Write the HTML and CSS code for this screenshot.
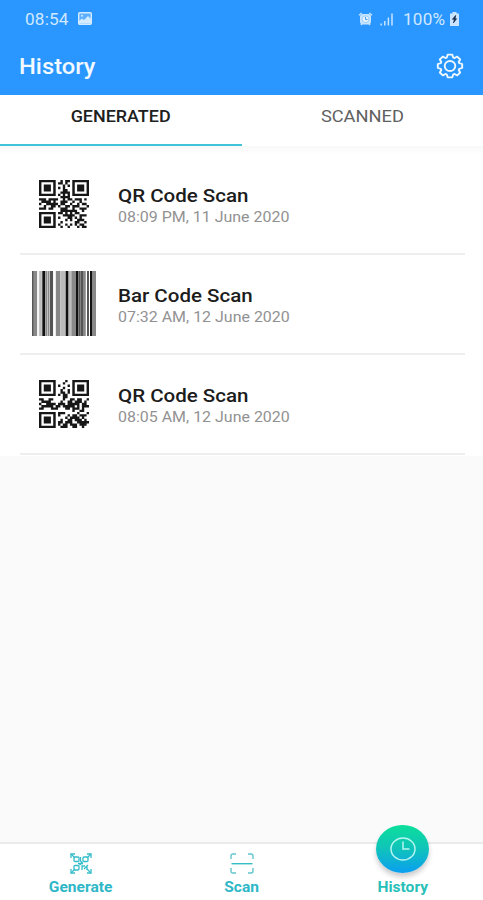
FILE: index.html
```html
<!DOCTYPE html>
<html lang="en">
<head>
<meta charset="utf-8">
<title>History</title>
<link rel="stylesheet" href="styles.css">
</head>
<body>
<div class="app">
  <header class="header">
    <div class="status">
      <span class="status-time"><span class="wide">08:54</span></span>
      <svg class="status-picture" width="14" height="13" viewBox="0 0 14 13"><rect x=".7" y=".7" width="12.6" height="11.6" rx="1" fill="#5dafff" stroke="#d5ebff" stroke-width="1.4"/><path d="M1 11.500V9l3-2.500 2 1.500 4-4 3 3v4.500z" fill="#d5ebff"/><circle cx="4" cy="3.800" r="1" fill="#d5ebff"/></svg>
      <div class="status-right">
        <svg width="15" height="14" viewBox="0 0 15 14"><path d="M1 3.3 3.7 1M14 3.3 11.3 1M3 13l1.5-2M12 13l-1.5-2" stroke="#c7e4ff" stroke-width="1.4"/><rect x="2" y="2" width="11" height="10.5" rx="3" fill="#c7e4ff"/><circle cx="7.5" cy="7.2" r="3.4" fill="#e4f3ff" stroke="#8cc6fb" stroke-width=".8"/><path d="M7.5 4.8v2.7h2" fill="none" stroke="#4b9fee"/></svg>
        <svg class="signal" width="14" height="13" viewBox="0 0 14 13" stroke="#c7e4ff" stroke-width="1.5"><path d="M1.200 12.500v-2M4.800 12.500V8M8.400 12.500V4.500M12 12.500V.5"/></svg>
        <span class="battery-text"><span class="wide">100%</span></span>
        <svg width="11" height="14" viewBox="0 0 11 14"><path d="M3.5 0h4v1.5H10V14H1V1.500h2.500z" fill="#cbe5ff"/><path d="M6.600 3.500 3.500 7.300h2L4.500 10.800l3-4H6z" fill="#152e4d" stroke="#152e4d" stroke-width=".8"/></svg>
      </div>
    </div>
    <div class="titlebar">
      <h1 class="title"><span class="wide">History</span></h1>
      <svg width="28" height="26" viewBox="-14 -13 28 26" fill="none" stroke="#eff8ff" stroke-width="1.8" stroke-linejoin="round"><g transform="scale(1.06 1)"><path d="M-2.200 -11.300H2.200L3 -8.500L4.300 -7.900L6.800 -9.400L9.600 -6.500L8.200 -4L8.700 -2.800L11.500 -2V2L8.700 2.800L8.200 4L9.600 6.500L6.800 9.400L4.300 7.900L3 8.500L2.200 11.300H-2.200L-3 8.500L-4.300 7.900L-6.800 9.400L-9.600 6.500L-8.200 4L-8.700 2.800L-11.500 2V-2L-8.700 -2.800L-8.200 -4L-9.600 -6.500L-6.800 -9.400L-4.300 -7.900L-3 -8.500Z"/><circle r="5"/></g></svg>
    </div>
  </header>
  <nav class="tabs">
    <div class="tab tab-active"><span class="wide">GENERATED</span></div>
    <div class="tab"><span class="wide">SCANNED</span></div>
  </nav>
  <main class="list">
    <article class="item">
      <div class="thumb">
        <svg width="50" height="48" viewBox="0 0 21 21" preserveAspectRatio="none" stroke="#171717" stroke-width="1.04"><g id="finders" fill="none"><path d="M.5 .5h6v6h-6zM14.500 .5h6v6h-6zM.5 14.500h6v6h-6z"/><path d="M2 3.500h3M16 3.500h3M2 17.500h3" stroke-width="3"/></g>
        <path d="M9 .5h1M11 .5h2M8 1.500h2M11 1.500h1M10 2.500h1M12 2.500h1M8 3.500h1M10 3.500h1M10 4.500h2M9 5.500h4M8 6.500h1M10 6.500h1M12 6.500h1M9 7.500h4M0 8.500h3M4 8.500h4M10 8.500h1M12 8.500h2M15 8.500h3M19 8.500h1M1 9.500h4M6 9.500h1M9 9.500h3M14 9.500h1M17 9.500h1M0 10.500h1M3 10.500h5M9 10.500h2M13 10.500h1M16 10.500h1M18 10.500h2M2 11.500h1M5 11.500h2M8 11.500h1M11 11.500h2M14 11.500h3M20 11.500h1M0 12.500h3M4 12.500h2M9 12.500h3M14 12.500h1M17 12.500h3M9 13.500h7M18 13.500h1M8 14.500h2M11 14.500h1M13 14.500h1M15 14.500h2M10 15.500h5M17 15.500h3M8 16.500h1M12 16.500h2M15 16.500h1M17 16.500h1M11 17.500h1M13 17.500h1M16 17.500h3M9 18.500h1M15 18.500h2M19 18.500h1M8 19.500h1M11 19.500h1M13 19.500h1M15 19.500h1M17 19.500h2M9 20.500h1M12 20.500h1M16 20.500h1M18 20.500h2"/></svg>
      </div>
      <div class="text"><h2 class="name"><span class="wide">QR Code Scan</span></h2><p class="date"><span class="wide">08:09 PM, 11 June 2020</span></p></div>
    </article>
    <article class="item">
      <div class="thumb">
        <svg class="barcode" width="64" height="65" viewBox="0 0 192 195" preserveAspectRatio="none"><path fill="#dedede" d="M0 0h192v195H0z"/><path fill="#888" d="M0 0h15v195H0zM40 0h6v195h-6zM48 0h4v195h-4zM72 0h12v195H72zM118 0h12v195h-12zM153 0h8v195h-8zM180 0h12v195h-12z"/><path fill="#555" d="M0 0h4v195H0zM54 0h9v195h-9zM140 0h6v195h-6zM147 0h6v195h-6z"/><path fill="#bbb" d="M22 0h7v195h-7zM85 0h14v195H85zM110 0h8v195h-8z"/><path fill="#fff" d="M16 0h4v195h-4zM64 0h6v195h-6zM162 0h3v195h-3zM170 0h4v195h-4z"/><path fill="#111" d="M31 0h8v195h-8zM101 0h8v195h-8zM131 0h8v195h-8zM166 0h4v195h-4zM174 0h6v195h-6z"/></svg>
      </div>
      <div class="text"><h2 class="name"><span class="wide">Bar Code Scan</span></h2><p class="date"><span class="wide">07:32 AM, 12 June 2020</span></p></div>
    </article>
    <article class="item">
      <div class="thumb">
        <svg width="50" height="48" viewBox="0 0 21 21" preserveAspectRatio="none" stroke="#171717" stroke-width="1.04"><use href="#finders"/>
        <path d="M11 .5h1M10 1.500h1M8 2.500h1M12 2.500h1M10 3.500h1M9 4.500h1M12 4.500h1M9 5.500h2M12 5.500h1M8 6.500h1M10 6.500h2M10 7.500h2M0 8.500h2M4 8.500h2M10 8.500h1M13 8.500h2M16 8.500h2M20 8.500h1M1 9.500h4M9 9.500h1M12 9.500h2M15 9.500h3M19 9.500h1M0 10.500h1M3 10.500h4M8 10.500h3M12 10.500h5M18 10.500h2M1 11.500h5M7 11.500h2M10 11.500h5M16 11.500h1M18 11.500h3M0 12.500h2M5 12.500h3M11 12.500h2M14 12.500h3M18 12.500h1M14 13.500h1M17 13.500h2M8 14.500h3M16 14.500h1M20 14.500h1M8 15.500h1M12 15.500h1M14 15.500h2M17 15.500h3M11 16.500h1M13 16.500h4M18 16.500h1M9 17.500h1M12 17.500h2M15 17.500h3M19 17.500h1M8 18.500h2M11 18.500h3M16 18.500h5M8 19.500h1M10 19.500h2M13 19.500h3M17 19.500h3M9 20.500h3M14 20.500h2M18 20.500h1"/></svg>
      </div>
      <div class="text"><h2 class="name"><span class="wide">QR Code Scan</span></h2><p class="date"><span class="wide">08:05 AM, 12 June 2020</span></p></div>
    </article>
  </main>
  <footer class="bottom">
    <div class="nav-item">
      <svg width="22" height="21" viewBox="0 0 22 21" fill="none" stroke="#35bdc9" stroke-width="1.300"><path d="M1 5V1h4M17 1h4v4M21 16v4h-4M5 20H1v-4" /><path d="m1 1 4 4M21 1l-4 4M1 20l4-4M21 20l-4-4"/><rect x="4" y="4" width="5" height="4.500" rx="1"/><rect x="13" y="4" width="5" height="4.500" rx="1"/><rect x="4" y="12.500" width="5" height="4.500" rx="1"/><path d="M10.500 4v4l2 2-3 2M8 10.500h5M12 17v-4h3M14 16l4-4M17 13v4"/></svg>
      <span class="nav-label"><span class="wide">Generate</span></span>
    </div>
    <div class="nav-item">
      <svg width="24" height="21" viewBox="0 0 24 21" fill="none" stroke="#62c6cb" stroke-width="1.400"><path d="M1 6V3q0-2 2-2h3M18 1h3q2 0 2 2v3M23 15v3q0 2-2 2h-3M6 20H3q-2 0-2-2v-3"/><path d="M1.500 10.700h21" stroke="#35bdc9"/></svg>
      <span class="nav-label"><span class="wide">Scan</span></span>
    </div>
    <div class="nav-item nav-current">
      <div class="bubble"><svg width="26" height="24" viewBox="0 0 26 24" fill="none" stroke="#b5f6ef" stroke-width="1.500"><ellipse cx="13" cy="12" rx="12" ry="11"/><path d="M13 4.500V12h6.500"/></svg></div>
      <span class="nav-label"><span class="wide">History</span></span>
    </div>
  </footer>
</div>
</body>
</html>
```

FILE: styles.css
```css
* { box-sizing: border-box; }
body { margin: 0; font-family: Roboto, "Liberation Sans", sans-serif; }
h1, h2, p { margin: 0; }
svg { display: block; flex: none; }
.app { width: 483px; height: 900px; display: flex; flex-direction: column; background: #fafafa; overflow: hidden; }
.wide { display: inline-block; white-space: nowrap; transform: scaleX(1.14); transform-origin: left center; }

.header { height: 95px; background: #2997ff; color: #f2f9ff; flex: none; }
.status { height: 38px; padding: 0 23px 0 25px; display: flex; align-items: center; color: #d0e8ff; font-size: 16px; letter-spacing: .2px; }
.status .wide { transform: scaleX(1.07); }
.status-time { width: 53px; }
.status-picture { margin-top: -2px; }
.status-right { margin-left: auto; display: flex; align-items: center; }
.signal { margin: 1px 9px 0 7px; }
.battery-text { width: 46px; }
.titlebar { height: 55px; padding: 0 19px 0 19px; display: flex; align-items: center; justify-content: space-between; }
.title { margin-top: 2px; font-size: 22px; font-weight: 500; line-height: 26px; }
.title .wide { transform: scaleX(1.08); }

.tabs { height: 51px; flex: none; display: flex; background: #fff; }
.tab { flex: 1; padding-top: 12px; text-align: center; font-size: 16px; line-height: 20px; color: #606060; }
.tab .wide { transform: scaleX(1.14); transform-origin: center; }
.tab-active { color: #202020; border-bottom: 2px solid #40c4da; font-weight: 500; }
.tab-active .wide { transform: scaleX(1.12); }

.list { height: 310px; flex: none; padding: 8px 18px 0 20px; background: linear-gradient(#f8f8f8, #fff 9px); }
.item { height: 100px; display: flex; align-items: center; border-bottom: 2px solid #eee; }
.item:first-child { height: 101px; }
.thumb { width: 88px; display: flex; justify-content: center; }
.barcode { margin-top: -2px; }
.text { margin: 4px 0 0 10px; }
.name { font-size: 19px; line-height: 23px; font-weight: 500; color: #1c1c1c; }
.name .wide { transform: scaleX(1.08); }
.date { font-size: 14px; line-height: 20px; color: #929292; }
.item:not(:first-child) .text { margin-top: 2px; }

.bottom { margin-top: auto; height: 58px; flex: none; display: flex; background: #fff; border-top: 2px solid #e9eaea; }
.nav-item { flex: 1; display: flex; flex-direction: column; align-items: center; padding-top: 9px; color: #2fb7c7; }
.nav-label { margin-top: 4px; font-size: 14px; line-height: 18px; font-weight: 700; }
.nav-label .wide { transform-origin: center; transform: scaleX(1.11); }
.nav-current { padding-top: 0; color: #29bfb9; }
.nav-current .nav-label { margin-top: 5px; }
.bubble { width: 53px; height: 48px; margin-top: -19px; display: flex; align-items: center; justify-content: center; border-radius: 50%; background: linear-gradient(#0bdf9b, #10c4b9 48%, #0a9ff0); box-shadow: 0 4px 5px rgba(0, 0, 0, .2); }
```
